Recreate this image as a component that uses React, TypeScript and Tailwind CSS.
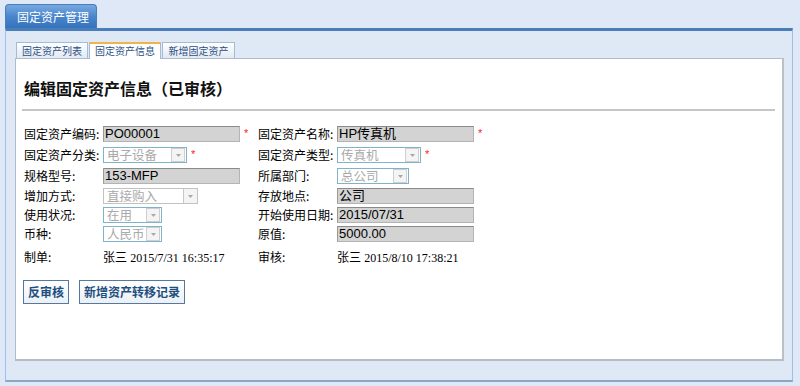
import React from "react";

const CJK = "font-['Noto_Sans_CJK_SC','Noto_Sans',sans-serif]";

function Label({ text }: { text: string }) {
  return (
    <div className={`w-[79px] shrink-0 text-[12px] leading-[16px] text-black ${CJK}`}>
      {text}
    </div>
  );
}

function Star() {
  return <span className="ml-[4px] text-[11px] leading-[14px] text-[#ff2020] font-['Liberation_Sans',sans-serif]">*</span>;
}

function TextBox({ value, star }: { value: string; star?: boolean }) {
  return (
    <div className="flex items-start w-[155px] shrink-0">
      <div
        className={`w-[137px] h-[16px] bg-[#d3d3d3] border border-[#b4b4b4] border-t-[#8a8a8a] border-l-[#9a9a9a] pl-[1px] text-[13px] leading-[14px] text-black font-['Liberation_Sans','Noto_Sans_CJK_SC',sans-serif] whitespace-nowrap`}
      >
        {value}
      </div>
      {star && <Star />}
    </div>
  );
}

function Arrow() {
  return (
    <svg width="5" height="3" viewBox="0 0 5 3">
      <path d="M0 0 L5 0 L2.5 3 Z" fill="#a8a8a8" />
    </svg>
  );
}

function SelectBox({
  value,
  width,
  star,
  disabledGray,
}: {
  value: string;
  width: string;
  star?: boolean;
  disabledGray?: boolean;
}) {
  return (
    <div className="flex items-start w-[155px] shrink-0">
      <div
        className={`${width} h-[16px] flex items-center bg-white border ${
          disabledGray ? "border-[#c2c2c2]" : "border-[#7fb3cb]"
        }`}
      >
        <div className={`flex-1 pl-[3px] text-[12.5px] leading-[14px] text-[#a9a9a9] whitespace-nowrap ${CJK}`}>
          {value}
        </div>
        <div
          className={`w-[14px] h-[14px] flex items-center justify-center bg-[#f4f4f4] border-l border-[#c8c8c8] ${
            disabledGray ? "" : "mr-[1px] h-[12px] border border-[#cfcfcf]"
          }`}
        >
          <Arrow />
        </div>
      </div>
      {star && <Star />}
    </div>
  );
}

function Row({ h, children }: { h: string; children: React.ReactNode }) {
  return <div className={`flex items-start ${h}`}>{children}</div>;
}

export default function App() {
  return (
    <div className="w-[800px] h-[386px] bg-[#dfe8f6] pt-[4px] px-[5px] overflow-hidden">
      {/* top tab */}
      <div className="flex">
        <div className={`w-[92px] h-[24px] rounded-t-[4px] border border-b-0 border-[#4a7dbb] bg-gradient-to-b from-[#77a9e0] via-[#4a86cc] to-[#3472bb] pl-[11px] text-white text-[12px] leading-[23px] ${CJK}`}>
          固定资产管理
        </div>
      </div>
      {/* panel */}
      <div className="w-[788px] h-[354px] border-t-[3px] border-t-[#4a7ebb] border-x border-x-[#9fbfe6] border-b-2 border-b-[#8ea6c6] bg-[#dfe9f6] pt-[10px] pl-[9px]">
        {/* inner tabs */}
        <div className="flex items-end h-[17px] gap-[1px] pl-[1px]">
          <div className={`w-[72px] h-[16px] border border-b-0 border-[#a3bbd6] bg-gradient-to-b from-white to-[#e2e9f2] text-center text-[10px] leading-[15px] text-[#2a4f86] ${CJK}`}>
            固定资产列表
          </div>
          <div className={`w-[72px] h-[17px] border border-b-0 border-[#a3bbd6] border-t-2 border-t-[#f0b44a] bg-white text-center text-[10px] leading-[14px] text-[#2a4f86] relative z-10 -mb-[1px] ${CJK}`}>
            固定资产信息
          </div>
          <div className={`w-[73px] h-[16px] border border-b-0 border-[#a3bbd6] bg-gradient-to-b from-white to-[#e2e9f2] text-center text-[10px] leading-[15px] text-[#2a4f86] ${CJK}`}>
            新增固定资产
          </div>
        </div>
        {/* white content */}
        <div className="w-[769px] h-[303px] bg-white border border-[#b0bccb] border-b-2 border-b-[#b4bcc6] border-r-2 border-r-[#b9c0c8]">
          <div className="pl-[8px] pt-[18px]">
            <div className={`text-[16px] leading-[22px] font-bold text-[#111] ${CJK}`}>
              编辑固定资产信息（已审核）
            </div>
          </div>
          <div className="ml-[6px] mt-[10px] w-[753px] h-[2px] bg-[#c6c6c6]" />
          <div className="pl-[8px] pt-[15px]">
            <Row h="h-[21px]">
              <Label text="固定资产编码:" />
              <TextBox value="PO00001" star />
              <Label text="固定资产名称:" />
              <TextBox value="HP传真机" star />
            </Row>
            <Row h="h-[21px]">
              <Label text="固定资产分类:" />
              <SelectBox value="电子设备" width="w-[84px]" star />
              <Label text="固定资产类型:" />
              <SelectBox value="传真机" width="w-[84px]" star />
            </Row>
            <Row h="h-[20px]">
              <Label text="规格型号:" />
              <TextBox value="153-MFP" />
              <Label text="所属部门:" />
              <SelectBox value="总公司" width="w-[72px]" />
            </Row>
            <Row h="h-[19px]">
              <Label text="增加方式:" />
              <SelectBox value="直接购入" width="w-[95px]" disabledGray />
              <Label text="存放地点:" />
              <TextBox value="公司" />
            </Row>
            <Row h="h-[19px]">
              <Label text="使用状况:" />
              <SelectBox value="在用" width="w-[59px]" />
              <Label text="开始使用日期:" />
              <TextBox value="2015/07/31" />
            </Row>
            <Row h="h-[23px]">
              <Label text="币种:" />
              <SelectBox value="人民币" width="w-[59px]" />
              <Label text="原值:" />
              <TextBox value="5000.00" />
            </Row>
            <Row h="h-[20px]">
              <Label text="制单:" />
              <div className="w-[155px] shrink-0 text-[12px] leading-[16px] whitespace-nowrap">
                <span className={CJK}>张三</span>{" "}
                <span className="font-['Liberation_Serif',serif]">2015/7/31 16:35:17</span>
              </div>
              <Label text="审核:" />
              <div className="w-[155px] shrink-0 text-[12px] leading-[16px] whitespace-nowrap">
                <span className={CJK}>张三</span>{" "}
                <span className="font-['Liberation_Serif',serif]">2015/8/10 17:38:21</span>
              </div>
            </Row>
            <div className="flex gap-[10px] mt-[11px] -ml-[1px]">
              <button className={`h-[24px] px-[4px] border border-[#55789c] bg-gradient-to-b from-white to-[#eaf0f6] text-[12px] font-bold text-[#1f4f7f] leading-[20px] ${CJK}`}>
                反审核
              </button>
              <button className={`h-[24px] px-[4px] border border-[#55789c] bg-gradient-to-b from-white to-[#eaf0f6] text-[12px] font-bold text-[#1f4f7f] leading-[20px] ${CJK}`}>
                新增资产转移记录
              </button>
            </div>
          </div>
        </div>
      </div>
    </div>
  );
}
